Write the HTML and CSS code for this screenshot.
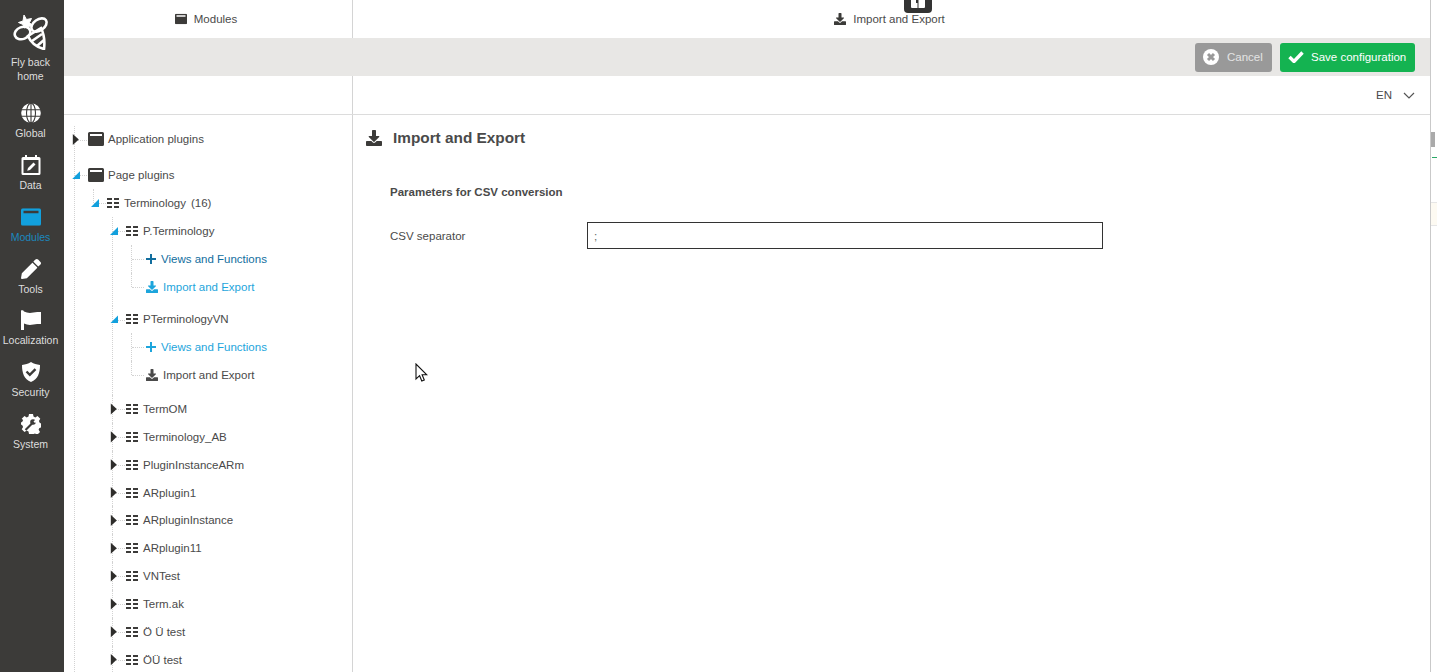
FILE: index.html
```html
<!DOCTYPE html>
<html lang="en">
<head>
  <meta charset="UTF-8" />
  <title>Modules - Import and Export</title>
  <link rel="stylesheet" href="styles.css">
</head>
<body>
  <!-- Shared icons -->
  <svg class="sprites" aria-hidden="true">
    <symbol id="i-download" viewBox="0 0 512 512"><path d="M216 0h80c13.3 0 24 10.700 24 24v168h87.700c17.800 0 26.700 21.500 14.100 34.100L269.700 378.300c-7.500 7.500-19.800 7.500-27.300 0L90.100 226.100c-12.600-12.600-3.700-34.100 14.100-34.100H192V24c0-13.300 10.700-24 24-24zm296 376v112c0 13.300-10.700 24-24 24H24c-13.300 0-24-10.700-24-24V376c0-13.300 10.700-24 24-24h146.700l49 49c20.100 20.100 52.500 20.100 72.600 0l49-49H488c13.300 0 24 10.700 24 24z"/></symbol>
    <symbol id="i-window" viewBox="0 0 16 14"><path fill-rule="evenodd" d="M1.500 0h13A1.500 1.500 0 0 1 16 1.500v11a1.500 1.500 0 0 1-1.500 1.500h-13A1.500 1.500 0 0 1 0 12.500v-11A1.500 1.500 0 0 1 1.500 0zM2 2v2h12V2z"/></symbol>
    <symbol id="i-table" viewBox="0 0 12 10"><path d="M0 0h5v2H0zM7 0h5v2H7zM0 4h5v2H0zM7 4h5v2H7zM0 8h5v2H0zM7 8h5v2H7z"/></symbol>
    <symbol id="i-plus" viewBox="0 0 10 10"><path d="M4 0h2v4h4v2H6v4H4V6H0V4h4z"/></symbol>
  </svg>

  <nav class="sidebar">
    <a class="side-home">
      <svg class="bee" viewBox="0 0 36 36" fill="none" stroke="#fff" stroke-width="2.600">
        <ellipse cx="26" cy="11" rx="8.500" ry="5.500" transform="rotate(-35 26 11)"/>
        <ellipse cx="9.500" cy="19" rx="8" ry="6" transform="rotate(-20 9.500 19)"/>
        <path d="M15 22l13-8c3 6 4 13 3 21-8-2-13-6-16-13z"/>
        <path d="M19 27l10-7M24 32l7-6"/>
        <path d="M10 7l1-6 2.500 4.500 5-1-2 4 3 3.500-5 .5-3.500 1.500-1-3.500-4.500-2z" fill="#fff" stroke-width="1"/>
      </svg>
      <span>Fly back home</span>
    </a>
    <a class="side-item">
      <svg viewBox="0 0 20 20"><circle cx="10" cy="10" r="9.800" fill="#fff"/><g fill="none" stroke="#3c3b39" stroke-width="1.100"><ellipse cx="10" cy="10" rx="4.500" ry="9.800"/><path d="M0 6.800h20M0 13.200h20M10 0v20"/></g></svg>
      <span>Global</span>
    </a>
    <a class="side-item">
      <svg viewBox="0 0 20 20"><path fill="#fff" d="M4 0h2v2h8V0h2v2h2a1.500 1.500 0 0 1 1.500 1.500v15A1.500 1.500 0 0 1 18 20H2a1.500 1.500 0 0 1-1.500-1.500v-15A1.500 1.500 0 0 1 2 2h2z"/><rect x="2.500" y="5" width="15" height="13" fill="#3c3b39"/><path fill="#fff" d="M12.500 7.500l2 2-5.500 5.500-2.800.8.800-2.800z"/></svg>
      <span>Data</span>
    </a>
    <a class="side-item is-active">
      <svg viewBox="0 0 16 14"><use href="#i-window"/></svg>
      <span>Modules</span>
    </a>
    <a class="side-item">
      <svg viewBox="0 0 512 512"><path d="M497.900 142.100l-46.100 46.100c-4.700 4.700-12.300 4.700-17 0l-111-111c-4.700-4.700-4.700-12.300 0-17l46.100-46.100c18.700-18.700 49.100-18.700 67.900 0l60.100 60.100c18.800 18.700 18.800 49.100 0 67.900zM284.200 99.800L21.600 362.400.4 483.900c-2.900 16.400 11.400 30.600 27.800 27.800l121.500-21.300 262.600-262.600c4.700-4.700 4.700-12.300 0-17l-111-111c-4.800-4.700-12.400-4.700-17.100 0z"/></svg>
      <span>Tools</span>
    </a>
    <a class="side-item">
      <svg viewBox="0 0 20 20"><path d="M0 .5C1 0 2.500 0 3 1.500c3 1.500 6 1.800 9.500 1 2.500-.5 5-.5 7.500-.5v12c-3 0-5 0-7.500.5-3.500.8-6.500.5-9.500-1V20H0z"/></svg>
      <span>Localization</span>
    </a>
    <a class="side-item">
      <svg viewBox="0 0 20 20"><path d="M10 0c3 2 5.500 2.500 9 3 0 8-2 14-9 17C3 17 1 11 1 3c3.500-.5 6-1 9-3z"/><path fill="none" stroke="#3c3b39" stroke-width="2.400" d="M5.500 9.500l3.300 3.300 5.700-5.700"/></svg>
      <span>Security</span>
    </a>
    <a class="side-item">
      <svg viewBox="0 0 20 20"><path d="M8 0h4l.5 2.600 1.800.8L16.500 2l2.800 2.800-1.400 2.200.8 1.800 1.300.7v4l-1.600.5-.8 1.800 1.400 2.200-2.800 2.800-2.200-1.400-1.800.8L12 20H8l-.5-2.600-1.800-.8-2.200 1.400L.7 15.200l1.400-2.200-.8-1.800L0 10.500v-2l1.300-.7.800-1.800L.7 4.800 3.500 2l2.200 1.400 1.800-.8z"/><path fill="none" stroke="#3c3b39" stroke-width="2.200" d="M4.500 16l6.500-6.500"/><circle cx="12" cy="8" r="2.800" fill="#3c3b39"/><path d="M12.500 7.500l2.500-2.500 1 2.500-2 1.500z"/></svg>
      <span>System</span>
    </a>
  </nav>

  <div class="app">
    <div class="cols top-row">
      <div class="col-left tab-title">
        <svg class="ic-12" viewBox="0 0 16 14"><use href="#i-window"/></svg>
        <span>Modules</span>
      </div>
      <div class="col-right tab-title">
        <svg class="ic-12" viewBox="0 0 512 512"><use href="#i-download"/></svg>
        <span>Import and Export</span>
      </div>
    </div>

    <div class="toolbar">
      <button class="btn btn-cancel">
        <svg viewBox="0 0 16 16"><circle cx="8" cy="8" r="8" fill="#fff"/><path fill="none" stroke="#999" stroke-width="3" d="M5 5l6 6M11 5l-6 6"/></svg>
        Cancel
      </button>
      <button class="btn btn-save">
        <svg viewBox="0 0 16 12"><path fill="none" stroke="#fff" stroke-width="3.400" d="M1.500 6l4.500 4.500L14.500 1.500"/></svg>
        Save configuration
      </button>
    </div>

    <div class="cols lang-row">
      <div class="col-left"></div>
      <div class="col-right lang">
        <span>EN</span>
        <svg viewBox="0 0 12 7"><path fill="none" stroke="#555" stroke-width="1.200" d="M1 1l5 5 5-5"/></svg>
      </div>
    </div>

    <div class="cols body-row">
      <div class="col-left tree-wrap">
        <ul class="tree">
          <li class="gap-8">
            <div class="row"><i class="arrow"></i><svg class="ic-win" viewBox="0 0 16 14"><use href="#i-window"/></svg>Application plugins</div>
          </li>
          <li class="more">
            <div class="row"><i class="arrow open"></i><svg class="ic-win" viewBox="0 0 16 14"><use href="#i-window"/></svg>Page plugins</div>
            <ul>
              <li>
                <div class="row"><i class="arrow open"></i><svg class="ic-tbl" viewBox="0 0 12 10"><use href="#i-table"/></svg>Terminology<span class="count">(16)</span></div>
                <ul>
                  <li class="gap-5">
                    <div class="row"><i class="arrow open"></i><svg class="ic-tbl" viewBox="0 0 12 10"><use href="#i-table"/></svg>P.Terminology</div>
                    <ul>
                      <li><div class="row leaf link-dark"><svg class="ic-plus" viewBox="0 0 10 10"><use href="#i-plus"/></svg>Views and Functions</div></li>
                      <li><div class="row leaf link-bright"><svg class="ic-dl" viewBox="0 0 512 512"><use href="#i-download"/></svg>Import and Export</div></li>
                    </ul>
                  </li>
                  <li class="gap-6">
                    <div class="row"><i class="arrow open"></i><svg class="ic-tbl" viewBox="0 0 12 10"><use href="#i-table"/></svg>PTerminologyVN</div>
                    <ul>
                      <li><div class="row leaf link-bright"><svg class="ic-plus" viewBox="0 0 10 10"><use href="#i-plus"/></svg>Views and Functions</div></li>
                      <li><div class="row leaf"><svg class="ic-dl" viewBox="0 0 512 512"><use href="#i-download"/></svg>Import and Export</div></li>
                    </ul>
                  </li>
                  <li><div class="row"><i class="arrow"></i><svg class="ic-tbl" viewBox="0 0 12 10"><use href="#i-table"/></svg>TermOM</div></li>
                  <li><div class="row"><i class="arrow"></i><svg class="ic-tbl" viewBox="0 0 12 10"><use href="#i-table"/></svg>Terminology_AB</div></li>
                  <li><div class="row"><i class="arrow"></i><svg class="ic-tbl" viewBox="0 0 12 10"><use href="#i-table"/></svg>PluginInstanceARm</div></li>
                  <li><div class="row"><i class="arrow"></i><svg class="ic-tbl" viewBox="0 0 12 10"><use href="#i-table"/></svg>ARplugin1</div></li>
                  <li><div class="row"><i class="arrow"></i><svg class="ic-tbl" viewBox="0 0 12 10"><use href="#i-table"/></svg>ARpluginInstance</div></li>
                  <li><div class="row"><i class="arrow"></i><svg class="ic-tbl" viewBox="0 0 12 10"><use href="#i-table"/></svg>ARplugin11</div></li>
                  <li><div class="row"><i class="arrow"></i><svg class="ic-tbl" viewBox="0 0 12 10"><use href="#i-table"/></svg>VNTest</div></li>
                  <li><div class="row"><i class="arrow"></i><svg class="ic-tbl" viewBox="0 0 12 10"><use href="#i-table"/></svg>Term.ak</div></li>
                  <li><div class="row"><i class="arrow"></i><svg class="ic-tbl" viewBox="0 0 12 10"><use href="#i-table"/></svg>Ö Ü test</div></li>
                  <li class="more"><div class="row"><i class="arrow"></i><svg class="ic-tbl" viewBox="0 0 12 10"><use href="#i-table"/></svg>ÖÜ test</div></li>
                </ul>
              </li>
            </ul>
          </li>
        </ul>
      </div>

      <div class="col-right content">
        <h2 class="page-title">
          <svg viewBox="0 0 512 512"><use href="#i-download"/></svg>
          <span>Import and Export</span>
        </h2>
        <h3 class="section-title">Parameters for CSV conversion</h3>
        <div class="field">
          <label for="csvSep">CSV separator</label>
          <input type="text" id="csvSep" value=";" />
        </div>
      </div>
    </div>
  </div>

  <!-- Edge of the window behind -->
  <aside class="edge">
    <div class="edge-thumb"></div>
    <div class="edge-tick"></div>
    <div class="edge-cell"></div>
  </aside>

  <!-- Overlays -->
  <div class="float-tab">
    <svg viewBox="0 0 14 8"><path fill="#fff" d="M0 0h5v3h1.500v5H1a1 1 0 0 1-1-1zM7.500 0H14v7a1 1 0 0 1-1 1H7.500z"/></svg>
  </div>
  <svg class="cursor" viewBox="0 0 13 20"><path fill="#fff" stroke="#111" stroke-width="1.100" d="M1 1v15l3.600-3.300 2.200 5.300 2.500-1-2.200-5.200h4.700z"/></svg>
</body>
</html>
```

FILE: styles.css
```css
* { box-sizing: border-box; }
html, body {
  height: 100%;
}
body {
  margin: 0;
  display: flex;
  overflow: hidden;
  background: white;
  color: #4a4a4a;
  font-family: "Liberation Sans", Arial, sans-serif;
  font-size: 11.5px;
}
.sprites { display: none; }

/* Sidebar */
.sidebar {
  width: 64px;
  flex-shrink: 0;
  background: #3c3b39;
  color: #dedede;
  font-size: 10.5px;
  padding: 14px 3px 0 0;
  text-align: center;
}
.side-home {
  display: block;
  height: 89px;
  line-height: 14px;
}
.side-home span {
  display: block;
  width: 50px;
  margin: 5px auto 0;
}
.bee {
  display: block;
  width: 36px;
  height: 36px;
  margin: 0 auto;
}
.side-item {
  display: flex;
  flex-direction: column;
  align-items: center;
  height: 51.85px;
  white-space: nowrap;
}
.side-item svg {
  width: 20px;
  height: 20px;
  margin-bottom: 4px;
  fill: white;
}
.side-item.is-active { color: #1b88bf; }
.side-item.is-active svg { fill: #12a0dd; }

/* Main area */
.app {
  width: 1366px;
  flex-shrink: 0;
  display: flex;
  flex-direction: column;
  min-height: 0;
}
.cols { display: flex; }
.col-left {
  width: 289px;
  flex-shrink: 0;
  border-right: 1px solid #d4d4d4;
}
.col-right { flex: 1; }
.top-row { height: 38px; }
.tab-title {
  display: flex;
  align-items: center;
  justify-content: center;
  gap: 7px;
  padding-right: 4px;
}
.ic-12 {
  width: 12px;
  height: 12px;
  fill: #3c3b39;
}
.toolbar {
  height: 38px;
  background: #e8e7e5;
  display: flex;
  align-items: center;
  justify-content: flex-end;
  gap: 8px;
  padding-right: 15px;
}
.btn {
  height: 29px;
  display: flex;
  align-items: center;
  border: none;
  border-radius: 3px;
  color: white;
  font-family: inherit;
  font-size: 11.5px;
  padding: 0 8px;
  white-space: nowrap;
}
.btn-cancel {
  width: 77px;
  background: #999;
  color: #e4e4e4;
  gap: 8px;
}
.btn-cancel svg { width: 16px; height: 16px; }
.btn-save {
  width: 135px;
  background: #14b351;
  gap: 7px;
}
.btn-save svg { width: 16px; height: 12px; }
.lang-row {
  height: 39px;
  border-bottom: 1px solid #dcdcdc;
}
.lang {
  display: flex;
  align-items: center;
  justify-content: flex-end;
  gap: 11px;
  padding-right: 15px;
}
.lang svg { width: 12px; height: 7px; }
.body-row {
  flex: 1;
  min-height: 0;
}

/* Tree */
.tree-wrap {
  overflow: hidden;
  padding: 10.5px 0 0 10px;
}
.tree, .tree ul {
  list-style: none;
  margin: 0;
  padding: 0;
}
.tree ul { margin-left: 19px; }
.tree { margin-left: 1px; }
.tree li {
  position: relative;
}
.tree li::before {
  content: "";
  position: absolute;
  left: -1px;
  top: 0;
  bottom: 0;
  border-left: 1px dotted #d2d2d2;
}
.tree li:last-child:not(.more)::before {
  bottom: auto;
  height: 14px;
}
.tree li::after {
  content: "";
  position: absolute;
  left: 0;
  top: 14px;
  width: 12px;
  border-top: 1px dotted #d2d2d2;
}
.tree li.gap-8 { padding-bottom: 8px; }
.tree li.gap-5 { padding-bottom: 5px; }
.tree li.gap-6 { padding-bottom: 6px; }
.row {
  position: relative;
  z-index: 1;
  display: flex;
  align-items: center;
  height: 27.85px;
  white-space: nowrap;
}
.arrow {
  width: 8px;
  height: 12px;
  flex-shrink: 0;
  margin-left: -3px;
  margin-right: 8px;
  background: #2e2d2b;
  clip-path: polygon(10% 4%, 85% 50%, 10% 96%);
}
.arrow.open {
  height: 8px;
  background: #12a0dd;
  clip-path: polygon(0 100%, 100% 100%, 100% 0);
}
.ic-win {
  width: 16px;
  height: 14px;
  margin-right: 4px;
  fill: #3c3b39;
  flex-shrink: 0;
}
.ic-tbl {
  width: 12px;
  height: 10px;
  margin-right: 5px;
  fill: #3c3b39;
  flex-shrink: 0;
}
.count { margin-left: 5px; }
.leaf { padding-left: 14px; }
.ic-plus {
  width: 10px;
  height: 10px;
  margin-right: 5px;
  fill: currentColor;
}
.ic-dl {
  width: 12px;
  height: 12px;
  margin-right: 5px;
  fill: currentColor;
}
.link-dark { color: #126e9e; }
.link-bright { color: #1da5dc; }

/* Content */
.content { padding: 13px 0 0 13px; }
.page-title {
  display: flex;
  align-items: center;
  gap: 11px;
  height: 20px;
  margin: 0;
  font-size: 15.35px;
  font-weight: bold;
}
.page-title span { margin-top: -1px; }
.page-title svg {
  width: 16px;
  height: 16px;
  fill: #3c3b39;
}
.section-title {
  margin: 37px 0 0 24px;
  height: 14px;
  line-height: 14px;
  font-size: 11.5px;
  font-weight: bold;
}
.field {
  display: flex;
  align-items: center;
  margin: 23px 0 0 24px;
}
.field label { width: 197px; }
.field input {
  width: 516px;
  height: 27px;
  padding: 0 6px;
  border: 1px solid #333;
  color: #666;
  font-family: inherit;
  font-size: 11.5px;
  outline: none;
}

/* Right edge */
.edge {
  flex: 1;
  position: relative;
  border-left: 1px solid #c9c9c9;
  background: white;
}
.edge-thumb {
  position: absolute;
  top: 132px;
  left: 0;
  width: 4px;
  height: 15px;
  background: #aaa;
}
.edge-tick {
  position: absolute;
  top: 157px;
  left: 1px;
  width: 5px;
  height: 1px;
  background: #2aa866;
}
.edge-cell {
  position: absolute;
  top: 202px;
  left: 0;
  right: 0;
  height: 24px;
  background: #fdfaf2;
  border-top: 1px solid #e6e6e6;
  border-bottom: 1px solid #e6e6e6;
}

/* Overlays */
.float-tab {
  position: absolute;
  left: 904px;
  top: 0;
  width: 28px;
  height: 13px;
  background: #333;
  border-radius: 0 0 4px 4px;
  display: flex;
  justify-content: center;
}
.float-tab svg { width: 14px; height: 8px; }
.cursor {
  position: absolute;
  left: 415px;
  top: 363px;
  width: 13px;
  height: 20px;
}
```
